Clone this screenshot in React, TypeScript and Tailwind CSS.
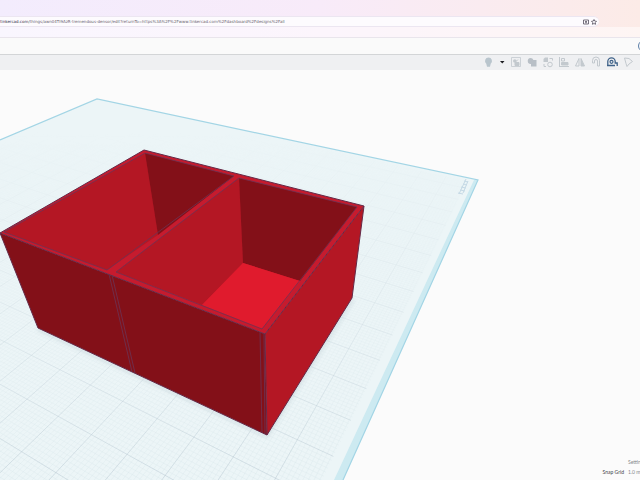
import type { ReactNode } from 'react';

type Point = [number, number];

// Vanishing points of the two workplane axes, and its far corner.
const FAR_CORNER: Point = [97, 99];
const VANISH_U: Point = [-925, -126];
const VANISH_V: Point = [617, -126];
const SCALE_U = -0.2716;
const SCALE_V = -0.508;

// Maps workplane coordinates (0..1 on both axes) to the viewport.
function project(u: number, v: number): Point {
  const a = SCALE_U * u;
  const b = SCALE_V * v;
  const w = 1 + a + b;
  return [
    (FAR_CORNER[0] + a * VANISH_U[0] + b * VANISH_V[0]) / w,
    (FAR_CORNER[1] + a * VANISH_U[1] + b * VANISH_V[1]) / w,
  ];
}

function segment(from: Point, to: Point) {
  return `M${from[0].toFixed(1)} ${from[1].toFixed(1)}L${to[0].toFixed(1)} ${to[1].toFixed(1)}`;
}

function gridPath(step: number) {
  const parts: string[] = [];
  const count = Math.round(1 / step);
  for (let i = 0; i < count; i++) {
    const u = 0.488 - Math.floor(0.488 / step) * step + i * step;
    const v = 0.484 - Math.floor(0.484 / step) * step + i * step;
    if (u < 0.98) parts.push(segment(project(u, 0), project(u, 1)));
    if (v < 1) parts.push(segment(project(0, v), project(0.98, v)));
  }
  return parts.join('');
}

const MAJOR_GRID = gridPath(0.05);
const MINOR_GRID = gridPath(0.005);

function Workplane() {
  return (
    <svg
      viewBox="0 70 640 410"
      preserveAspectRatio="xMinYMin slice"
      className="block h-full w-full"
      role="img"
      aria-label="Workplane with a red divided box"
    >
      <defs>
        <linearGradient id="fade" x1="0" y1="0" x2="0" y2="1">
          <stop offset="0.15" stopColor="#fff" stopOpacity="0" />
          <stop offset="0.55" stopColor="#fff" stopOpacity="0.4" />
          <stop offset="1" stopColor="#fff" />
        </linearGradient>
        <mask id="distance" maskUnits="userSpaceOnUse" x="0" y="70" width="640" height="410">
          <rect x="0" y="70" width="640" height="410" fill="url(#fade)" />
        </mask>
        <filter id="soft" x="-10%" y="-10%" width="120%" height="120%">
          <feGaussianBlur stdDeviation="2" />
        </filter>
      </defs>

      <path d="M0 140L97 99L478 180L343 480H0Z" fill="#ecf5f7" />
      <g mask="url(#distance)" fill="none">
        <path d={MINOR_GRID} stroke="#b4d2db" strokeWidth="0.5" opacity="0.25" />
        <path d={MAJOR_GRID} stroke="#a4b6c2" strokeWidth="0.6" opacity="0.5" />
      </g>
      <path d="M478 180L343 480H334L474 180Z" fill="#cdeaf1" />
      <path d="M0 140L97 99L478 180L343 480" fill="none" stroke="#a3d5e5" strokeWidth="1.2" />
      <g fill="none" stroke="#c6dae6" strokeWidth="1">
        <path d="M458 193l5 1M460 190l5 1M461 187l5 1M463 184l4 1M464 181l4 1M459 194l7-15M463 193l5-12" />
      </g>

      <path d="M38 329L267 436L353 299" fill="none" stroke="#8ba0aa" strokeWidth="2" opacity="0.4" filter="url(#soft)" />

      {/* outer walls */}
      <path d="M0 233L265 334L267 435L38 328Z" fill="#831018" />
      <path d="M265 334L364 206L352 298L267 435Z" fill="#b41724" />
      {/* rim */}
      <path d="M0 233L144 150L364 206L265 334Z" fill="#c61b2e" />
      {/* left compartment */}
      <path d="M4 232L145 153L158 235L107 270Z" fill="#b41724" />
      <path d="M145 153L234 176L158 235Z" fill="#831018" />
      {/* right compartment */}
      <path d="M239 178L116 272L202 305L243 263Z" fill="#b41724" />
      <path d="M239 178L357 207L300 281L243 263Z" fill="#831018" />
      <path d="M243 263L300 281L262 329L202 305Z" fill="#e01b2d" />

      <g fill="none" stroke="#6b3355" strokeWidth="0.8" strokeLinejoin="round">
        <path d="M4 232L145 153L234 176L107 270Z" />
        <path d="M239 178L357 207L262 329L116 272Z" />
        <path d="M109 274L132 372M112 275L135 373M260 332L262 433M264 334L265 434" />
      </g>
      <g fill="none" stroke="#642a48" strokeWidth="1" strokeLinejoin="round">
        <path d="M0 233L144 150L364 206L265 334Z" />
        <path d="M0 233L38 328L267 435L352 298L364 206M265 334L267 435" />
      </g>
    </svg>
  );
}

function ToolButton({ label, active = false, children }: { label: string; active?: boolean; children: ReactNode }) {
  return (
    <button type="button" aria-label={label} className={`size-3 shrink-0 ${active ? 'text-[#3f6289]' : 'text-[#c3c9ce]'}`}>
      <svg viewBox="0 0 12 12" className="size-3" fill="none" stroke="currentColor" strokeWidth="1">
        {children}
      </svg>
    </button>
  );
}

function Toolbar() {
  return (
    <div
      role="toolbar"
      aria-label="Edit"
      className="flex h-4 shrink-0 items-start justify-end gap-1 border-t border-[#d3d5d7] bg-[#eff0f2] pt-px pr-1.5"
    >
      <ToolButton label="Show all">
        <path d="M6.500 1.500a3.500 3.500 0 0 0-2.200 6.200l.7 3h3l.7-3a3.500 3.500 0 0 0-2.200-6.200z" fill="#b9c5cd" stroke="none" />
      </ToolButton>
      <button type="button" aria-label="Visibility options" className="w-2 text-[#1b1b1f]">
        <svg viewBox="0 0 8 12" className="h-3 w-2">
          <path d="M2 5h4.500L4.250 7.500z" fill="currentColor" />
        </svg>
      </button>
      <ToolButton label="Group">
        <path d="M1.500 1.500h9v9h-9z" strokeWidth="0.8" />
        <circle cx="4.800" cy="5" r="1.800" fill="currentColor" stroke="none" />
        <path d="M6 5.500l2-2M5 6.500h4v3H5z" fill="currentColor" />
      </ToolButton>
      <ToolButton label="Union group">
        <path d="M4.500 2a3 3 0 0 1 2.900 2H10.500v6.500H5V8a3 3 0 0 1-.5-6z" fill="#b8bfc6" stroke="none" />
      </ToolButton>
      <ToolButton label="Ungroup">
        <path d="M3 1.500h3V6H1.500V3z" fill="currentColor" stroke="none" />
        <circle cx="8" cy="8.500" r="2.300" />
        <path d="M7.500 2.500h3v2M2 8v2.500h2" />
      </ToolButton>
      <ToolButton label="Align">
        <path d="M1.500 1v10M1 10.500h10" />
        <path d="M3.500 2.500h3v2.500h-3z" />
        <path d="M3.500 6.500h6.500v2.500H3.500z" fill="currentColor" />
      </ToolButton>
      <ToolButton label="Mirror">
        <path d="M5 2.500V10H1.500z" />
        <path d="M7 2.500V10h3.500z" fill="currentColor" />
      </ToolButton>
      <ToolButton label="Snap">
        <path d="M2.500 4.500a3.500 3.500 0 0 1 7 0V10H7.500V5a1.500 1.500 0 0 0-3 0v2M2.500 4.500V7h2" />
      </ToolButton>
      <ToolButton label="Cruise" active>
        <path d="M1.800 9V5.500a3.700 3.700 0 0 1 7.400 0V7h2v3M1 9.500h8" strokeWidth="1.300" />
        <circle cx="5.500" cy="5.800" r="1.500" strokeWidth="1.200" />
      </ToolButton>
      <ToolButton label="Drop to workplane">
        <path d="M2.500 2L7 2.500l3.500 3L7 8l-2 2.500-1-3z" />
      </ToolButton>
    </div>
  );
}

function AddressBar() {
  return (
    <div className="flex h-[11px] shrink-0">
      <div className="flex min-w-0 flex-1 items-center rounded-r-full border-y border-[#ece6f1] bg-[#fdfbfe] pr-0.5 font-['DejaVu_Sans',sans-serif] text-[4px] leading-[9px]">
        <label htmlFor="address" className="shrink-0 text-[#2f2944]">tinkercad.com</label>
        <input
          id="address"
          className="min-w-0 flex-1 bg-transparent text-[#69636f] outline-none"
          defaultValue="/things/awn04TI9AzR-tremendous-densor/edit?returnTo=https%3A%2F%2Fwww.tinkercad.com%2Fdashboard%2Fdesigns%2Fall"
        />
        <div className="flex gap-0.5 text-[#56505f]">
          <button type="button" aria-label="Install app">
            <svg viewBox="0 0 6 6" className="size-1.5" fill="none" stroke="currentColor" strokeWidth="0.8">
              <path d="M.5 1h5v4h-5zM2 2.500h2M2 3.700h2" />
            </svg>
          </button>
          <button type="button" aria-label="Bookmark this page">
            <svg viewBox="0 0 6 6" className="size-1.5" fill="none" stroke="currentColor" strokeWidth="0.8">
              <path d="M3 .5l.8 1.600 1.700.2-1.200 1.200.3 1.800L3 4.500l-1.600.8.3-1.800L.5 2.300l1.700-.2z" />
            </svg>
          </button>
        </div>
      </div>
      <div className="w-[41px] shrink-0" />
    </div>
  );
}

export default function App() {
  return (
    <div className="flex h-screen flex-col overflow-hidden bg-[#fbfbfb]">
      <header className="flex h-[38px] shrink-0 flex-col border-b border-[#e9e5ec] bg-linear-to-r from-[#f3ecfd] via-[#f8ebf9] to-[#fcebe7]">
        <div className="h-4 shrink-0" />
        <AddressBar />
        <div className="flex-1 bg-white/50" />
      </header>
      <div className="flex h-4 shrink-0 items-center justify-end overflow-hidden bg-[#fafafa]">
        <button type="button" aria-label="Account" className="-mr-2.5 size-3 rounded-full border border-[#5c7fa8]" />
      </div>
      <Toolbar />
      <main className="relative min-h-0 flex-1">
        <Workplane />
        <div className="absolute right-0 bottom-0 flex flex-col items-end pb-[3px] font-[Lato,sans-serif] text-[5px] leading-[10px] text-[#3f4347]">
          <button type="button" className="w-3 text-left whitespace-nowrap text-[#85898d]">Settings</button>
          <label className="flex gap-1 whitespace-nowrap">
            Snap Grid
            <select className="w-3 appearance-none text-[#85898d]">
              <option>1.0 mm</option>
            </select>
          </label>
        </div>
      </main>
    </div>
  );
}
